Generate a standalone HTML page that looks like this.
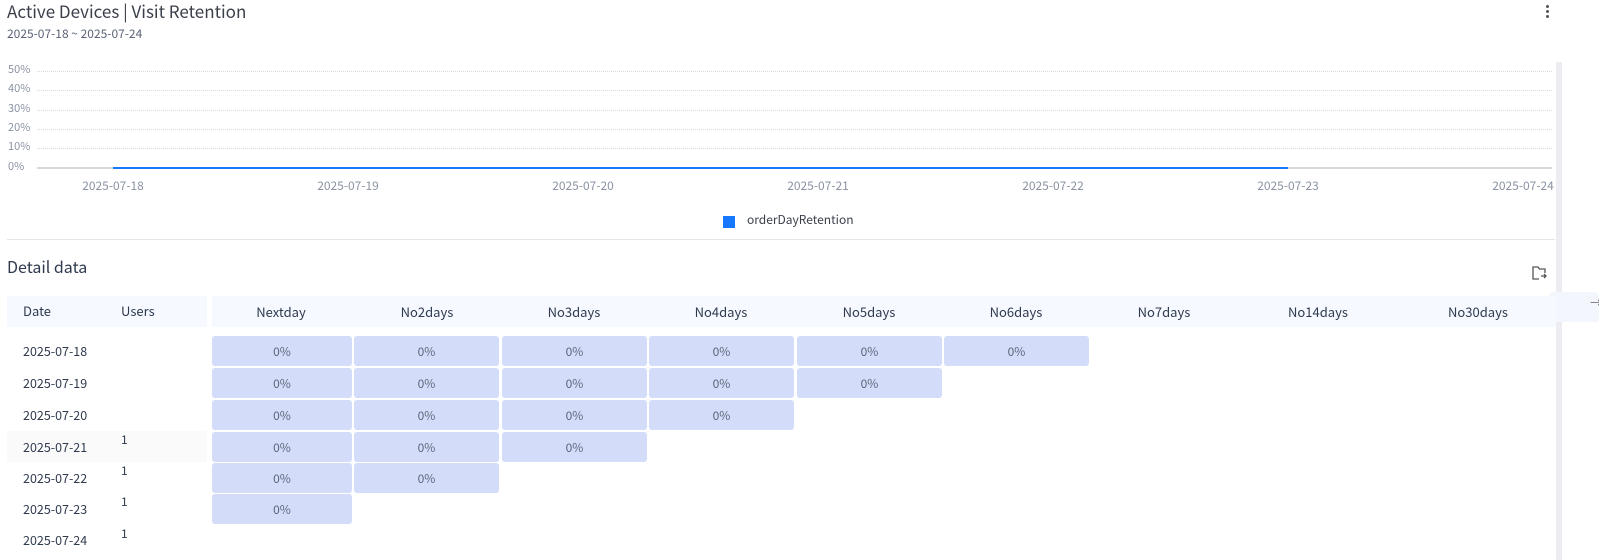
<!DOCTYPE html><html><head><style>
body{margin:0;width:1599px;height:560px;overflow:hidden;background:#fff;font-family:"Noto Sans CJK SC","Liberation Sans",sans-serif;position:relative;line-height:1.2}
.a{position:absolute;white-space:nowrap}
.yl{position:absolute;left:8px;font-size:11px;color:#8a93a3}
.g{position:absolute;left:37px;width:1515px;border-top:1px dotted #d6d9de}
.xl{position:absolute;top:179px;font-size:12px;color:#8a93a3;transform:translateX(-50%)}
.h{position:absolute;top:304px;font-size:13px;color:#2f3a4f;transform:translateX(-50%)}
.c{position:absolute;height:30px;background:#d3ddfa;border-radius:3px;font-size:12px;color:#5b6477;text-align:center;line-height:31px}
.d{position:absolute;left:23px;font-size:12.5px;color:#2f3a4f}
.u{position:absolute;left:121px;font-size:12px;color:#2f3a4f}
</style></head><body>
<div class="a" style="left:7px;top:1px;font-size:17px;color:#3a3f4a">Active Devices | Visit Retention</div>
<div class="a" style="left:7px;top:27px;font-size:12px;color:#5b6477">2025-07-18 ~ 2025-07-24</div>
<div class="a" style="left:1546px;top:5px;width:4px"><div style="width:3px;height:3px;border-radius:2px;background:#555;margin-bottom:2px"></div><div style="width:3px;height:3px;border-radius:2px;background:#555;margin-bottom:2px"></div><div style="width:3px;height:3px;border-radius:2px;background:#555"></div></div>
<div class="yl" style="top:63px">50%</div><div class="g" style="top:71px"></div>
<div class="yl" style="top:82px">40%</div><div class="g" style="top:90px"></div>
<div class="yl" style="top:102px">30%</div><div class="g" style="top:110px"></div>
<div class="yl" style="top:121px">20%</div><div class="g" style="top:129px"></div>
<div class="yl" style="top:140px">10%</div><div class="g" style="top:148px"></div>
<div class="yl" style="top:160px">0%</div>
<div class="a" style="left:37px;top:167px;width:1515px;height:2px;background:#d8d8d8"></div>
<div class="a" style="left:113px;top:167px;width:1175px;height:2px;background:#1677ff"></div>
<div class="xl" style="left:113px">2025-07-18</div><div class="xl" style="left:348px">2025-07-19</div><div class="xl" style="left:583px">2025-07-20</div><div class="xl" style="left:818px">2025-07-21</div><div class="xl" style="left:1053px">2025-07-22</div><div class="xl" style="left:1288px">2025-07-23</div><div class="xl" style="left:1523px">2025-07-24</div>
<div class="a" style="left:723px;top:216px;width:12px;height:12px;background:#1677ff"></div>
<div class="a" style="left:747px;top:213px;font-size:12px;color:#3a3f4a">orderDayRetention</div>
<div class="a" style="left:7px;top:239px;width:1548px;height:1px;background:#e3e5e8"></div>
<div class="a" style="left:1556px;top:62px;width:6px;height:498px;background:#ececf2"></div>
<div class="a" style="left:1549px;top:292px;width:50px;height:30px;background:#f3f6fc;border-radius:4px"></div>
<div class="a" style="left:1590px;top:296px;font-size:12px;color:#666">→</div>
<div class="a" style="left:7px;top:257px;font-size:16px;color:#2f3a4f">Detail data</div>
<svg class="a" style="left:1531px;top:265px" width="16" height="16" viewBox="0 0 16 16" fill="none" stroke="#555" stroke-width="1.3"><path d="M8 14H2V2h5l1.5 2H14v4"/><path d="M10 11h5M13 9l2 2-2 2"/></svg>
<div class="a" style="left:7px;top:296px;width:200px;height:31px;background:#f6f9ff"></div>
<div class="a" style="left:212px;top:296px;width:1344px;height:31px;background:#f6f9ff"></div>
<div class="a" style="left:23px;top:303px;font-size:13px;color:#2f3a4f">Date</div>
<div class="a" style="left:121px;top:303px;font-size:13px;color:#2f3a4f">Users</div>
<div class="h" style="left:281px">Nextday</div><div class="h" style="left:427px">No2days</div><div class="h" style="left:574px">No3days</div><div class="h" style="left:721px">No4days</div><div class="h" style="left:869px">No5days</div><div class="h" style="left:1016px">No6days</div><div class="h" style="left:1164px">No7days</div><div class="h" style="left:1318px">No14days</div><div class="h" style="left:1478px">No30days</div>
<div class="a" style="left:7px;top:431px;width:200px;height:31px;background:#fafafa"></div>
<div class="d" style="top:343px">2025-07-18</div>
<div class="d" style="top:375px">2025-07-19</div>
<div class="d" style="top:407px">2025-07-20</div>
<div class="d" style="top:439px">2025-07-21</div><div class="u" style="top:433px">1</div>
<div class="d" style="top:470px">2025-07-22</div><div class="u" style="top:464px">1</div>
<div class="d" style="top:501px">2025-07-23</div><div class="u" style="top:495px">1</div>
<div class="d" style="top:532px">2025-07-24</div><div class="u" style="top:527px">1</div>
<div class="c" style="left:212px;top:336px;width:140px">0%</div><div class="c" style="left:354px;top:336px;width:145px">0%</div><div class="c" style="left:502px;top:336px;width:145px">0%</div><div class="c" style="left:649px;top:336px;width:145px">0%</div><div class="c" style="left:797px;top:336px;width:145px">0%</div><div class="c" style="left:944px;top:336px;width:145px">0%</div>
<div class="c" style="left:212px;top:368px;width:140px">0%</div><div class="c" style="left:354px;top:368px;width:145px">0%</div><div class="c" style="left:502px;top:368px;width:145px">0%</div><div class="c" style="left:649px;top:368px;width:145px">0%</div><div class="c" style="left:797px;top:368px;width:145px">0%</div>
<div class="c" style="left:212px;top:400px;width:140px">0%</div><div class="c" style="left:354px;top:400px;width:145px">0%</div><div class="c" style="left:502px;top:400px;width:145px">0%</div><div class="c" style="left:649px;top:400px;width:145px">0%</div>
<div class="c" style="left:212px;top:432px;width:140px">0%</div><div class="c" style="left:354px;top:432px;width:145px">0%</div><div class="c" style="left:502px;top:432px;width:145px">0%</div>
<div class="c" style="left:212px;top:463px;width:140px">0%</div><div class="c" style="left:354px;top:463px;width:145px">0%</div>
<div class="c" style="left:212px;top:494px;width:140px">0%</div>
</body></html>
